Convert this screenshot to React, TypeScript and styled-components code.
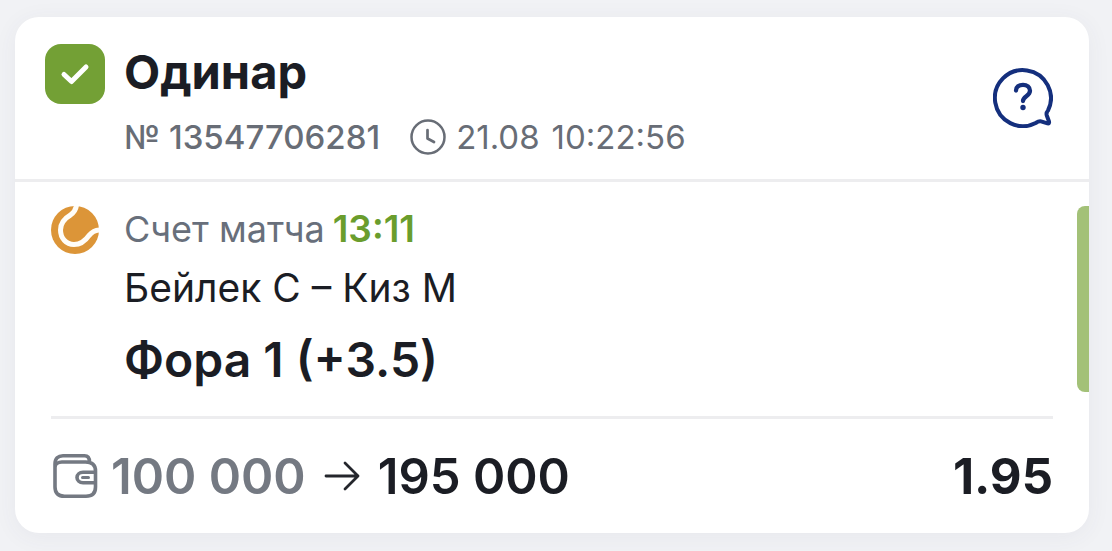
import React from "react";
import styled, { createGlobalStyle } from "styled-components";

const GlobalStyle = createGlobalStyle`
  * {
    box-sizing: border-box;
  }

  body {
    margin: 0;
    background: #f1f2f5;
    font-family: Inter, "Liberation Sans", sans-serif;
    font-optical-sizing: none;
    color: #1b1d24;
  }

  h1, h2, p {
    margin: 0;
  }
`;

const Page = styled.main`
  padding: 17px 23px 18px 15px;
`;

const Card = styled.article`
  background: #fff;
  border-radius: 24px;
  box-shadow: 0 4px 24px rgba(60, 68, 100, 0.06);
`;

const Header = styled.header`
  display: grid;
  grid-template-columns: 60px 1fr auto;
  column-gap: 19px;
  padding: 27px 36px 22px 30px;
  border-bottom: 3px solid #ededef;
`;

const StatusBadge = styled.span`
  display: grid;
  place-items: center;
  width: 60px;
  height: 60px;
  border-radius: 16px;
  background: #73a035;
`;

const Title = styled.h1`
  font-size: 47px;
  line-height: 56px;
  font-weight: 700;
`;

const Meta = styled.div`
  display: flex;
  align-items: center;
  margin-top: 17px;
  font-size: 33px;
  line-height: 40px;
  color: #686d76;
`;

const CouponNumber = styled.span`
  font-weight: 500;
`;

const Placed = styled.time`
  display: flex;
  align-items: center;
  gap: 10px;
  margin-left: 30px;
`;

const Clock = styled.span`
  margin-left: 2px;
`;

const HelpButton = styled.button`
  display: block;
  align-self: start;
  width: 60px;
  height: 60px;
  margin-top: 24px;
  padding: 0;
  border: 0;
  background: none;
  cursor: pointer;
`;

const Event = styled.section`
  display: grid;
  grid-template-columns: 48px 1fr 12px;
  column-gap: 25px;
  padding: 24px 0 24px 36px;
`;

const EventText = styled.div`
  display: flex;
  flex-direction: column;
`;

const Score = styled.p`
  font-size: 36px;
  line-height: 46px;
  color: #686f7b;
`;

const ScoreValue = styled.strong`
  margin-left: 8px;
  font-size: 37px;
  font-weight: 600;
  color: #6a9d2d;
`;

const Teams = styled.p`
  margin-top: 12px;
  font-size: 39px;
  line-height: 48px;
`;

const Outcome = styled.h2`
  margin-top: 18px;
  padding-bottom: 2px;
  font-size: 48px;
  line-height: 60px;
  font-weight: 600;
`;

const ResultStripe = styled.span`
  border-radius: 8px 0 0 8px;
  background: #a3c178;
`;

const Totals = styled.footer`
  display: flex;
  align-items: center;
  margin: 0 36px;
  padding: 28px 0 26px;
  border-top: 3px solid #ededef;
  font-size: 49px;
  line-height: 60px;
  font-weight: 600;
`;

const Stake = styled.span`
  margin-left: 12px;
  color: #747982;
`;

const Arrow = styled.svg`
  margin: 0 17px;
`;

const Odds = styled.span`
  margin-left: auto;
  font-weight: 700;
`;

export default function App() {
  return (
    <>
      <GlobalStyle />
      <Page>
        <Card>
          <Header>
            <StatusBadge>
              <svg width="60" height="60" viewBox="0 0 60 60" fill="none" aria-hidden="true">
                <path d="M19 30.5L26.5 37.5L41 23" stroke="#fff" strokeWidth="5" strokeLinecap="round" strokeLinejoin="round" />
              </svg>
            </StatusBadge>
            <div>
              <Title>Одинар</Title>
              <Meta>
                <CouponNumber>№ 13547706281</CouponNumber>
                <Placed>
                  <svg width="36" height="36" viewBox="0 0 36 36" fill="none" stroke="#686d76" strokeLinecap="round" strokeLinejoin="round" aria-hidden="true">
                    <circle cx="18" cy="18" r="16.5" strokeWidth="2.5" />
                    <path d="M17.5 11V19.5L24 23" strokeWidth="2.7" />
                  </svg>
                  <span>21.08</span>
                  <Clock>10:22:56</Clock>
                </Placed>
              </Meta>
            </div>
            <HelpButton type="button" aria-label="Помощь">
              <svg width="60" height="60" viewBox="0 0 60 60" fill="none" stroke="#142f7d" strokeLinecap="round" strokeLinejoin="round" aria-hidden="true">
                <path d="M55 42.5A28 28 0 1 0 42.7 55C45 53.4 46.3 52.8 48 53.3L54.5 55.3C55.8 55.6 56.4 55 56 53.5L53.8 47.5C53.3 46 53.2 44.5 55 42.5Z" strokeWidth="4" />
                <path d="M23 22.5C23 18.8 26 16.8 30 16.8C34 16.8 37 19.2 37 22.8C37 28 30 28.5 30 33" strokeWidth="4.3" />
                <circle cx="30" cy="39.5" r="2.7" fill="#142f7d" stroke="none" />
              </svg>
            </HelpButton>
          </Header>

          <Event>
            <svg width="48" height="48" viewBox="0 0 48 48" fill="none" aria-hidden="true">
              <circle cx="24" cy="24" r="24" fill="#dc9538" />
              <path d="M25.5 -1C25 4 23 6.5 19.5 9C12.5 13 9.5 18 9.5 24C9.5 32 15 38.5 23 38.5C30 38.5 34.5 34.5 38 29.5C41 26 44 24 49 24" stroke="#fffdf8" strokeWidth="5" />
            </svg>
            <EventText>
              <Score>
                Счет матча
                <ScoreValue>13:11</ScoreValue>
              </Score>
              <Teams>Бейлек С – Киз М</Teams>
              <Outcome>Фора 1 (+3.5)</Outcome>
            </EventText>
            <ResultStripe />
          </Event>

          <Totals>
            <svg width="48" height="48" viewBox="0 0 48 48" fill="none" stroke="#747982" strokeWidth="3.6" strokeLinejoin="round" aria-hidden="true">
              <path d="M4 14.5C4 11 7 9 11 9H34.5C41 9 44.5 12 44.5 18V34C44.5 40 41 43.2 35 43.2H13.5C7 43.2 4 40 4 34V11C4 5.5 7 2.8 12 2.8H33.5C37 2.8 38.5 5 38.5 9" />
              <path d="M44.5 19.3H32C28.5 19.3 26 21.5 26 24.5C26 27.5 28.5 29.7 32 29.7H44.5" />
              <path d="M31.5 24.5H37.5" strokeWidth="3" strokeLinecap="round" />
            </svg>
            <Stake>100 000</Stake>
            <Arrow width="38" height="36" viewBox="0 0 38 36" fill="none" stroke="#24262c" strokeWidth="2.8" strokeLinecap="round" strokeLinejoin="round" aria-hidden="true">
              <path d="M3 17H35M22 4L35 17L22 30" />
            </Arrow>
            <span>195 000</span>
            <Odds>1.95</Odds>
          </Totals>
        </Card>
      </Page>
    </>
  );
}
